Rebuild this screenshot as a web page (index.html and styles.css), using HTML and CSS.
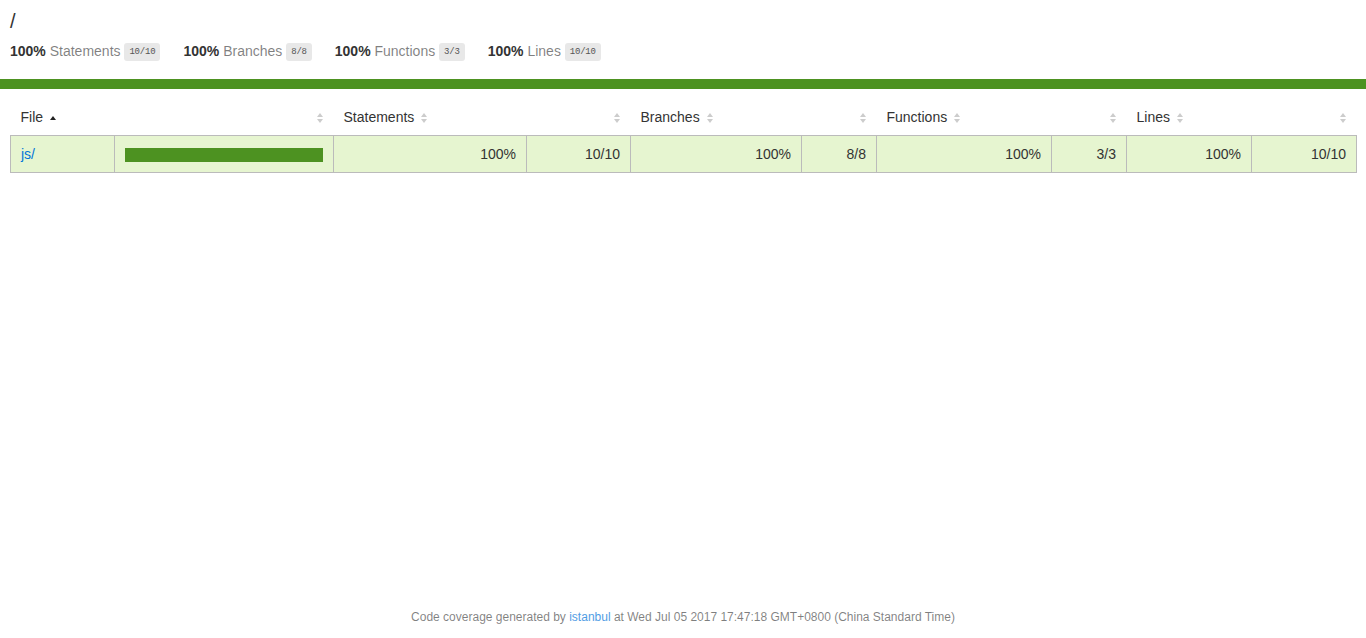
FILE: index.html
```html
<!doctype html>
<html lang="en">
<head>
    <meta charset="utf-8" />
    <title>Code coverage report for All files</title>
    <link rel="stylesheet" href="styles.css">
</head>
<body>
<div class="wrapper">
    <div class="pad1">
        <h1>/</h1>
        <div class="summary">
            <div class="stat">
                <span class="strong">100% </span>
                <span class="quiet">Statements</span>
                <span class="fraction">10/10</span>
            </div>
            <div class="stat">
                <span class="strong">100% </span>
                <span class="quiet">Branches</span>
                <span class="fraction">8/8</span>
            </div>
            <div class="stat">
                <span class="strong">100% </span>
                <span class="quiet">Functions</span>
                <span class="fraction">3/3</span>
            </div>
            <div class="stat">
                <span class="strong">100% </span>
                <span class="quiet">Lines</span>
                <span class="fraction">10/10</span>
            </div>
        </div>
    </div>
    <div class="status-line high"></div>
    <div class="pad1">
        <table class="coverage-summary">
            <colgroup>
                <col class="w-file"><col class="w-pic">
                <col class="w-st"><col class="w-st-abs">
                <col class="w-br"><col class="w-abs">
                <col class="w-fn"><col class="w-abs">
                <col class="w-ln"><col class="w-ln-abs">
            </colgroup>
            <thead>
                <tr>
                    <th class="file sorted">File<span class="sorter"></span></th>
                    <th class="pic"><span class="sorter"></span></th>
                    <th class="pct">Statements<span class="sorter"></span></th>
                    <th class="abs"><span class="sorter"></span></th>
                    <th class="pct">Branches<span class="sorter"></span></th>
                    <th class="abs"><span class="sorter"></span></th>
                    <th class="pct">Functions<span class="sorter"></span></th>
                    <th class="abs"><span class="sorter"></span></th>
                    <th class="pct">Lines<span class="sorter"></span></th>
                    <th class="abs"><span class="sorter"></span></th>
                </tr>
            </thead>
            <tbody>
                <tr class="high">
                    <td class="file"><a href="#">js/</a></td>
                    <td class="pic"><div class="chart"><div class="cover-fill" style="width: 100%;"></div></div></td>
                    <td class="pct">100%</td>
                    <td class="abs">10/10</td>
                    <td class="pct">100%</td>
                    <td class="abs">8/8</td>
                    <td class="pct">100%</td>
                    <td class="abs">3/3</td>
                    <td class="pct">100%</td>
                    <td class="abs">10/10</td>
                </tr>
            </tbody>
        </table>
    </div>
</div>
<div class="footer quiet small">
    Code coverage generated by <a href="#">istanbul</a> at Wed Jul 05 2017 17:47:18 GMT+0800 (China Standard Time)
</div>
</body>
</html>
```

FILE: styles.css
```css
*, *:after, *:before {
    box-sizing: border-box;
}
html, body {
    margin: 0;
    padding: 0;
}
body {
    font-family: "Liberation Sans", Arial, sans-serif;
    font-size: 14px;
    color: #333;
    min-height: 100vh;
    display: flex;
    flex-direction: column;
}
a {
    color: #0074D9;
    text-decoration: none;
}
h1 {
    font-size: 20px;
    font-weight: normal;
    margin: 0;
}
.wrapper {
    flex: 1;
}
.pad1 {
    padding: 10px;
}
.small {
    font-size: 12px;
}
.strong {
    font-weight: bold;
}
.quiet {
    color: rgba(0,0,0,0.5);
}
.quiet a {
    opacity: 0.7;
}
.summary {
    display: flex;
}
.stat {
    padding: 10px 23px 10px 0;
}
.fraction {
    font-family: "Liberation Mono", monospace;
    font-size: 9px;
    letter-spacing: -0.2px;
    color: #555;
    background: #E8E8E8;
    padding: 4px 5px;
    border-radius: 3px;
    vertical-align: middle;
}
.status-line {
    height: 10px;
}
.status-line.high {
    background: rgb(77,146,33);
}

/* summary table */
.coverage-summary {
    border-collapse: collapse;
    width: 100%;
    table-layout: fixed;
}
.w-file { width: 104px; }
.w-pic { width: 219px; }
.w-st { width: 193px; }
.w-st-abs { width: 104px; }
.w-br { width: 171px; }
.w-abs { width: 75px; }
.w-fn { width: 175px; }
.w-ln { width: 125px; }
.w-ln-abs { width: 105px; }
.coverage-summary tr {
    border-bottom: 1px solid #bbb;
}
.coverage-summary thead tr {
    border-bottom: none;
}
.coverage-summary tbody {
    border: 1px solid #bbb;
}
.coverage-summary td,
.coverage-summary th {
    padding: 10px;
    line-height: 16px;
}
.coverage-summary td {
    border-right: 1px solid #bbb;
}
.coverage-summary td:last-child {
    border-right: none;
}
.coverage-summary th {
    text-align: left;
    font-weight: normal;
    white-space: nowrap;
}
.coverage-summary th.pic,
.coverage-summary th.abs,
.coverage-summary td.pct,
.coverage-summary td.abs {
    text-align: right;
}
.coverage-summary td.file {
    white-space: nowrap;
}
tr.high {
    background: rgb(230,245,208);
}
.chart {
    line-height: 0;
    border: 1px solid rgb(77,146,33);
    margin-top: 2px;
}
.cover-fill {
    display: inline-block;
    height: 12px;
    background: rgb(77,146,33);
}

/* sort arrows */
.sorter {
    display: inline-block;
    position: relative;
    width: 7px;
    height: 10px;
    margin-left: 0.5em;
    vertical-align: -1px;
}
.sorter:before,
.sorter:after {
    content: "";
    position: absolute;
    left: 0;
    border-left: 3.5px solid transparent;
    border-right: 3.5px solid transparent;
}
.sorter:before {
    top: 0;
    border-bottom: 4px solid #ccc;
}
.sorter:after {
    top: 6px;
    border-top: 4px solid #ccc;
}
.sorted .sorter:before {
    top: 3px;
    border-bottom-color: #222;
}
.sorted .sorter:after {
    display: none;
}

.footer {
    height: 48px;
    padding: 20px;
    text-align: center;
}
```
